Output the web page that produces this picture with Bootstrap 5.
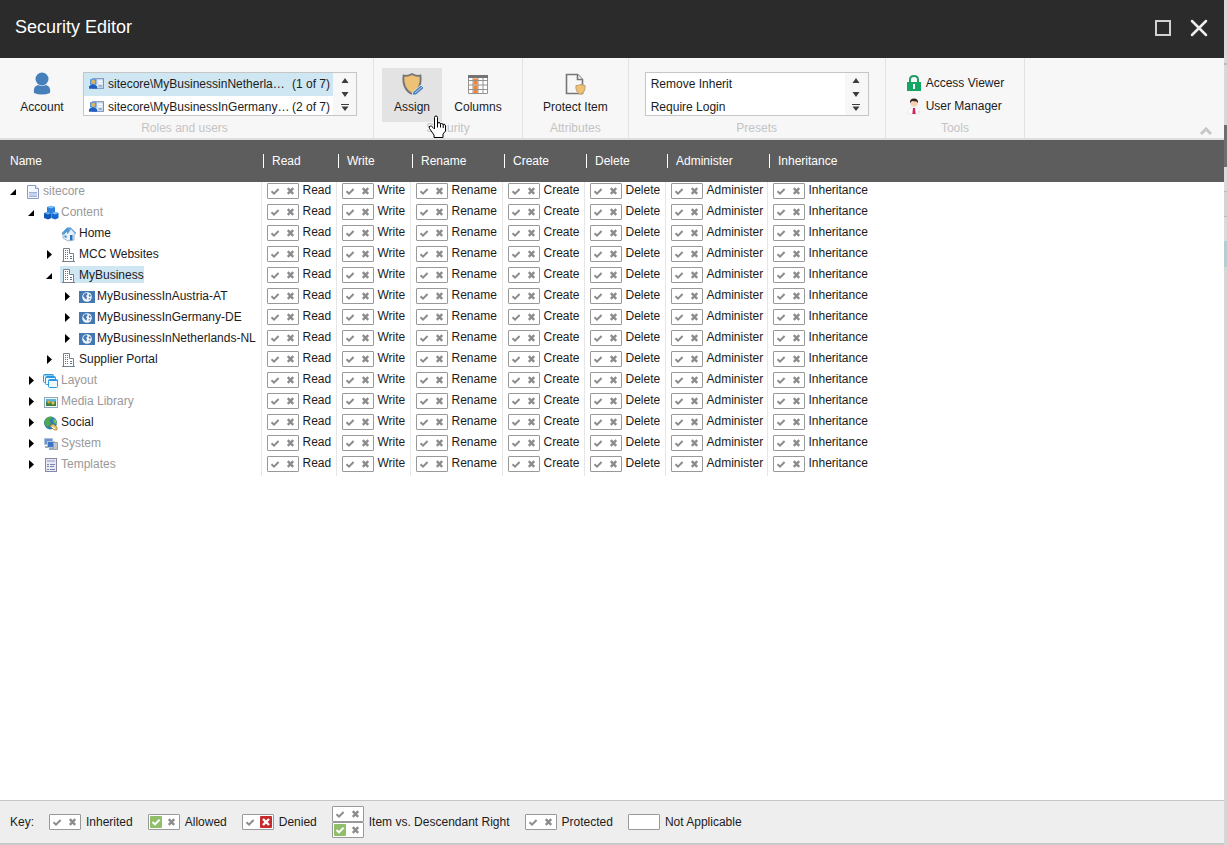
<!DOCTYPE html>
<html lang="en">
<head>
<meta charset="utf-8">
<meta name="viewport" content="width=device-width, initial-scale=1">
<title>Security Editor</title>
<link href="https://cdn.jsdelivr.net/npm/bootstrap@5.3.0/dist/css/bootstrap.min.css" rel="stylesheet">
<style>
body { font-family: "Liberation Sans", Arial, sans-serif; font-size: 12px; line-height: 16px; color: #1c1c1c; background: #d6d6d6; }
button { border: 0; background: none; padding: 0; color: inherit; }
svg { display: block; flex: none; }
.window { border-bottom: 2px solid #c8c8c8; background: #fff; }
.backdrop-edge { width: 3px; background: linear-gradient(#d9d9d9 63px, #bbb 63px 65px, #d9d9d9 65px 125px, #6e6e6e 125px 167px, #dadada 167px 191px, #bbb 191px 192px, #d4d4d4 192px 216px, #bbb 216px 217px, #dadada 217px 241px, #b7cdd1 241px 267px, #d6d6d6 267px); }
.titlebar { background: #2b2b2b; height: 58px; padding: 0 16px 2px 15px; color: #fff; }
.titlebar h1 { font-size: 18px; line-height: 24px; padding-bottom: 2px; }
.ribbon { background: #f7f7f7; height: 82px; border-bottom: 2px solid #dedede; }
.chunk { border-right: 1px solid #e2e2e2; padding: 10px 16px 4px; }
.chunk-accounts { padding-left: 12px; }
.chunk-title { color: #c4c4c4; text-align: center; line-height: 12px; }
.tool-row { gap: 6px; padding-right: 6px; }
.account-row { gap: 11px; }
.tool-btn { height: 54px; min-width: 60px; padding: 4px 4px 7px; display: flex; flex-direction: column; align-items: center; justify-content: space-between; position: relative; white-space: nowrap; flex: none; }
.tool-btn.active { background: #e3e3e3; }
.hand { position: absolute; left: 46px; top: 47px; z-index: 2; }
.picker { border: 1px solid #c6c6c6; background: #fff; height: 44px; margin-top: 4px; overflow: hidden; }
.picker-item { display: flex; width: 100%; height: 23px; align-items: center; padding: 0 3px 2px 5px; text-align: left; white-space: nowrap; }
.picker-item.selected { background: #cfe7f3; }
.picker-arrows { width: 23px; background: #f7f7f7; padding: 4px 0 3px; }
.users-picker { width: 274px; }
.presets-picker { width: 224px; }
.tool-links { padding: 3px 4px 0; }
.tool-link { color: inherit; text-decoration: none; height: 23px; gap: 4px; display: flex; align-items: center; white-space: nowrap; }
.collapse-btn { padding: 0 11px 2px 0; }
.rights { table-layout: fixed; width: 100%; border-collapse: collapse; }
.rights thead th { background: #5d5d5d; color: #fff; font-weight: normal; height: 42px; padding: 0 0 0 2px; white-space: nowrap; }
.rights thead th:first-child { padding-left: 10px; }
.head-label { border-left: 1px solid #fff; padding-left: 8px; line-height: 14px; display: block; }
.rights tbody tr { height: 21px; }
.rights td, .rights tbody th { padding: 0; font-weight: normal; white-space: nowrap; }
.rights td { border-left: 1px solid #e6e6e6; }
.cell-inner { display: flex; height: 21px; padding: 1px 0 0 5px; gap: 4px; line-height: 15px; }
.toggle-pair { display: inline-flex; width: 32px; height: 16px; border: 1px solid #999; border-radius: 1px; background: #fff; flex: none; justify-content: space-between; padding: 1px 1px; }
.toggle-pair > * { width: 12px; height: 12px; display: block; }
.node { height: 21px; display: flex; align-items: center; padding-bottom: 4px; }
.twisty { width: 16px; height: 16px; flex: none; }
.node-link { display: flex; align-items: center; color: #1c1c1c; text-decoration: none; gap: 2px; height: 17px; padding-left: 1px; }
.node-link.muted { color: #999; }
.node-link.selected { background: #cfe7f3; }
.node-link svg { margin-top: 2px; }
.d0 { padding-left: 8px; } .d1 { padding-left: 26px; } .d2 { padding-left: 44px; } .d3 { padding-left: 62px; }
.legend { background: #eee; border-top: 1px solid #c6c6c6; height: 43px; padding: 0 10px 1px; gap: 15px; white-space: nowrap; }
.legend-item { display: flex; align-items: center; gap: 5px; }
</style>
<script src="https://cdn.jsdelivr.net/npm/bootstrap@5.3.0/dist/js/bootstrap.bundle.min.js"></script>
</head>
<body class="d-flex min-vh-100">

<svg width="0" height="0" class="position-absolute" aria-hidden="true">
  <symbol id="i-check" viewBox="0 0 12 12"><path d="M2.5 6.2 5 8.6 9.6 4" fill="none" stroke="#8c8c8c" stroke-width="2"/></symbol>
  <symbol id="i-cross" viewBox="0 0 12 12"><path d="M2.8 3.2 8.2 8.8M8.2 3.2 2.8 8.8" fill="none" stroke="#8c8c8c" stroke-width="2.4"/></symbol>
  <symbol id="i-allow" viewBox="0 0 12 12"><rect width="12" height="12" rx="1" fill="#8fbf6a"/><path d="M2.5 6 5 8.4 9.6 3.6" fill="none" stroke="#fff" stroke-width="2"/></symbol>
  <symbol id="i-deny" viewBox="0 0 12 12"><rect width="12" height="12" rx="1" fill="#c62a2a"/><path d="m3 3 6 6M9 3 3 9" stroke="#fff" stroke-width="2.4"/></symbol>
  <symbol id="i-open" viewBox="0 0 16 16"><path d="M8 6v6H2z" fill="#000"/></symbol>
  <symbol id="i-closed" viewBox="0 0 16 16"><path d="M3 4 8 8.500l-5 4.500z" fill="#000"/></symbol>
  <symbol id="i-card" viewBox="0 0 14 14"><rect x="3.500" y="2.500" width="10" height="9" fill="#d9e4f3" stroke="#7a93bb"/><path d="M8.500 5h4M8.500 7h4" stroke="#fff"/><rect x="9" y="8.500" width="3" height="1.500" fill="#8ba3c9"/><path d="M1 3h6v5H1z" fill="#4c8fdc"/><circle cx="4" cy="5.500" r="2" fill="#e0b55f"/><path d="M0 12V9.500q4-3.500 7.500 0V12z" fill="#1f5fc0"/></symbol>
  <symbol id="i-page" viewBox="0 0 16 16"><path d="M2.500 1.500h8l3 3v10h-11z" fill="#f4f7fd" stroke="#8b9cc4"/><path d="M10.500 1.500v3h3" fill="#fff" stroke="#8b9cc4"/><path d="M4 8h8v5H4z" fill="#c3d1ec"/><path d="M4 8.500h8M4 12.500h8" stroke="#9db0da"/></symbol>
  <symbol id="i-cubes" viewBox="0 0 16 16"><path d="M4 2 8 .8l4 1.200v5L8 8.500 4 7z" fill="#2a80dc"/><path d="m4 2 4-1.200L12 2 8 3.500z" fill="#7cc0f8"/><path d="m1 8 4-1 3.500 1.500V13L5 14.500 1 13z" fill="#1257b8"/><path d="m1 8 4-1 3 1.300L5 9.500z" fill="#62acf2"/><path d="m8.500 8 3.500-1 3.500 1v5L12 14.500 8.500 13z" fill="#1768cc"/><path d="m8.500 8 3.500-1 3.500 1-3.500 1.500z" fill="#7cc0f8"/></symbol>
  <symbol id="i-home" viewBox="0 0 16 16"><path d="m1 7 5-5h4l5 5-2 1v6l-6 1-5-3V9z" fill="#e8f0f8" stroke="#8aa5c0" stroke-width=".8"/><path d="m.8 7.800 5-6h4.500L6.800 8l-1.300-2L3 8.800z" fill="#4f9bd8"/><path d="m10 2 5.200 5.500-1.200.6-4-4.600-3 4z" fill="#78aeda"/><path d="M9 9h2.500v5L9 14.500z" fill="#2873b5"/><path d="M3.500 9.500h2V12l-2-.8z" fill="#3787c8"/></symbol>
  <symbol id="i-building" viewBox="0 0 16 16"><path d="M2.500 14.500v-13h6v5h4v8z" fill="#fff" stroke="#76818e"/><path d="M4 3.500h1m1 0h1m-3 2h1m1 0h1m-3 2h1m1 0h1m-3 2h1m1 0h1m2 0h2m-7 2h1m1 0h1m2 0h2" stroke="#5d7188"/><path d="M1 14.500h13" stroke="#76818e"/></symbol>
  <symbol id="i-globe-site" viewBox="0 0 16 16"><rect y="2" width="16" height="12" fill="#4378b3"/><circle cx="8" cy="8" r="4.800" fill="#f2f6fa"/><path d="m4 7 1.500-2.500L8 4l.5 1.500L7 7l1 1.200-.5 2.300L6 9.500zM10.500 5l1.500 2-1.500 1-.8-1.500zM9.500 9.500l2-.5-1.500 2z" fill="#4378b3"/></symbol>
  <symbol id="i-windows" viewBox="0 0 16 16"><g fill="#eff8ff" stroke="#2998e2"><rect x=".5" y="1.500" width="10" height="8" rx="1"/><rect x="2.500" y="3.500" width="10" height="8" rx="1"/><rect x="5.500" y="6.500" width="9" height="8" rx="1"/></g><path d="M1 2h9M3 4.500h9M6 7.500h8" stroke="#2998e2"/></symbol>
  <symbol id="i-image" viewBox="0 0 16 16"><rect x="1.500" y="3.500" width="13" height="10" fill="#f5f8fa" stroke="#8fa6b6"/><path d="M3 5h10v4H3z" fill="#5bb4dd"/><path d="M3 8q3-2 5 0t5-1v5H3z" fill="#398243"/><circle cx="6" cy="8" r="1.600" fill="#dca333"/><circle cx="10" cy="9" r="1.600" fill="#e3c249"/></symbol>
  <symbol id="i-social" viewBox="0 0 16 16"><circle cx="7.500" cy="8" r="6.500" fill="#2d7fb2"/><path d="M1.500 6q2-4 6.500-4.500L10 3 6 5l2 3-3 4-3-2z" fill="#51a84a"/><path d="m10 4 3 1 1 4-3-1z" fill="#7bc061"/><path d="m7 11 3-2 4 3v3h-3z" fill="#e6c677" stroke="#a8822e" stroke-width=".7"/><path d="m9 12 3 2" stroke="#fff"/></symbol>
  <symbol id="i-system" viewBox="0 0 16 16"><rect x="1.500" y="2.500" width="8" height="6" fill="#6294d7" stroke="#b4c1d2"/><rect x="4.500" y="5.500" width="7" height="6" fill="#3e74c4" stroke="#b4c1d2"/><path d="M2 10h3v2H2z" fill="#9aabc0"/><path d="M10.500 6.500h4v7h-4z" fill="#c0c5cb" stroke="#9aa2ad"/><path d="M6 13h4" stroke="#9aabc0" stroke-width="2"/></symbol>
  <symbol id="i-template" viewBox="0 0 16 16"><rect x="2.500" y="1.500" width="11" height="13" fill="#e6e8f4" stroke="#8788a8"/><path d="M4 4h8" stroke="#8d96bd" stroke-width="1"/><path d="M4 7.500h2m1 0h5m-8 2h2m1 0h4m-7 3h2m1 0h5" stroke="#7d85ae"/></symbol>
</svg>

<main class="window flex-grow-1 d-flex flex-column">
  <header class="titlebar d-flex align-items-center justify-content-between">
    <h1 class="m-0 fw-normal">Security Editor</h1>
    <div class="d-flex align-items-center gap-3">
      <button type="button" aria-label="Maximize"><svg width="20" height="20" viewBox="0 0 20 20"><rect x="2" y="3" width="14" height="14" fill="none" stroke="#d2d2d2" stroke-width="2"/></svg></button>
      <button type="button" aria-label="Close"><svg width="18" height="18" viewBox="0 0 18 18"><path d="m2 2 14 14M16 2 2 16" stroke="#eee" stroke-width="2.500" stroke-linecap="round"/></svg></button>
    </div>
  </header>

  <div class="ribbon d-flex flex-shrink-0">
    <section class="chunk chunk-accounts d-flex flex-column justify-content-between">
      <div class="account-row d-flex">
        <button type="button" class="tool-btn">
          <svg width="22" height="24" viewBox="0 0 22 24"><circle cx="11" cy="7" r="6.500" fill="#4680bb"/><path d="M3 21q-1-7 4-8 4 2 8 0 5 1 4 8-8 3-16 0z" fill="#4680bb"/></svg>
          Account
        </button>
        <div class="picker users-picker d-flex">
          <div class="flex-grow-1">
            <button type="button" class="picker-item selected"><svg class="me-1" width="15" height="15"><use href="#i-card"/></svg>sitecore\MyBusinessinNetherla…<span class="ms-auto">(1 of 7)</span></button>
            <button type="button" class="picker-item"><svg class="me-1" width="15" height="15"><use href="#i-card"/></svg>sitecore\MyBusinessInGermany…<span class="ms-auto">(2 of 7)</span></button>
          </div>
          <div class="picker-arrows d-flex flex-column align-items-center justify-content-between">
            <button type="button" aria-label="Previous account"><svg width="8" height="8" viewBox="0 0 8 8"><path d="M.5 6 4 1l3.500 5z" fill="#3c3c3c"/></svg></button>
            <button type="button" aria-label="Next account"><svg width="8" height="8" viewBox="0 0 8 8"><path d="m.5 1 3.500 5 3.500-5z" fill="#3c3c3c"/></svg></button>
            <button type="button" aria-label="Show all accounts"><svg width="8" height="8" viewBox="0 0 8 8"><path d="M0 0h8v1H0zM.5 2.500 4 7l3.500-4.500z" fill="#3c3c3c"/></svg></button>
          </div>
        </div>
      </div>
      <div class="chunk-title">Roles and users</div>
    </section>

    <section class="chunk d-flex flex-column justify-content-between px-2">
      <div class="tool-row d-flex">
        <button type="button" class="tool-btn active">
          <svg width="24" height="24" viewBox="0 0 24 24"><path d="M3.500 3.500Q8 4.500 12 2q4 2.500 8.500 1.500Q22 17 12 22 2 17 3.500 3.500z" fill="#edc277" stroke="#777" stroke-width="1.800"/><path d="m12 23 1-3 8-7 3 3-8 7z" fill="#447dbd" stroke="#e3e3e3"/><path d="m15 21 7-6" stroke="#c7d9ed"/></svg>
          Assign
          <svg class="hand" width="18" height="24" viewBox="0 0 18 24"><path d="M6.500 14V2.500q0-1.500 1.500-1.500t1.500 1.500V9q0-1.500 1.500-1.500t1.500 2q0-1 1.300-1t1.400 1.500q0-1 1-.8t1.300 1.800v5L15 19v3.500H6V20l-4.500-6.500Q.5 11.500 2 11t3 1.500z" fill="#fff" stroke="#000"/><path d="M9.500 9v3.500m3-3v3m2.700-2.500v3" stroke="#000"/></svg>
        </button>
        <button type="button" class="tool-btn">
          <svg width="22" height="24" viewBox="0 0 22 24"><path d="M1.500 3.500h19v18h-19zM1 8.500h20M1 13h20M1 17.500h20M6 3v18m5-18v18m5-18v18" fill="#fff" stroke="#929292"/><path d="M1 3h20v3H1z" fill="#747474"/><path d="M6.500 6.500h4v1.500h-4zm0 2.500h4v3.500h-4zm0 4.500h4V17h-4zm0 4.500h4v3h-4z" fill="#f08439"/></svg>
          Columns
        </button>
      </div>
      <div class="chunk-title">Security</div>
    </section>

    <section class="chunk d-flex flex-column justify-content-between">
      <button type="button" class="tool-btn">
        <svg width="22" height="24" viewBox="0 0 22 24"><path d="M2.500 2.500h11l5 5v14h-16z" fill="#f7f7f7" stroke="#777" stroke-width="1.600"/><path d="M13.500 2.500v5h5" fill="#fff" stroke="#777" stroke-width="1.600"/><path d="M12 13.500q3 0 5-1 2 1 4 1 1 6-4.500 9-5.500-3-4.500-9z" fill="#edc277" stroke="#c19d66"/></svg>
        Protect Item
      </button>
      <div class="chunk-title">Attributes</div>
    </section>

    <section class="chunk d-flex flex-column justify-content-between">
      <div class="picker presets-picker d-flex">
        <div class="flex-grow-1">
          <button type="button" class="picker-item">Remove Inherit</button>
          <button type="button" class="picker-item">Require Login</button>
        </div>
        <div class="picker-arrows d-flex flex-column align-items-center justify-content-between">
          <button type="button" aria-label="Previous preset"><svg width="8" height="8" viewBox="0 0 8 8"><path d="M.5 6 4 1l3.500 5z" fill="#3c3c3c"/></svg></button>
          <button type="button" aria-label="Next preset"><svg width="8" height="8" viewBox="0 0 8 8"><path d="m.5 1 3.500 5 3.500-5z" fill="#3c3c3c"/></svg></button>
          <button type="button" aria-label="Show all presets"><svg width="8" height="8" viewBox="0 0 8 8"><path d="M0 0h8v1H0zM.5 2.500 4 7l3.500-4.500z" fill="#3c3c3c"/></svg></button>
        </div>
      </div>
      <div class="chunk-title">Presets</div>
    </section>

    <section class="chunk d-flex flex-column justify-content-between">
      <div class="tool-links">
        <a href="#access-viewer" class="tool-link"><svg width="16" height="18" viewBox="0 0 16 18"><path d="M4 9V5.500Q4 2 8 2t4 3.500V9" fill="none" stroke="#249c67" stroke-width="2"/><path d="M1 8h14v9H1z" fill="#12a765"/><path d="M7 10h2v5H7z" fill="#fff"/></svg>Access Viewer</a>
        <a href="#user-manager" class="tool-link"><svg width="16" height="18" viewBox="0 0 16 18"><path d="M2 17q0-6 4-6h4q4 0 4 6z" fill="#fff" stroke="#e3e3e8" stroke-width=".7"/><circle cx="8" cy="6" r="3.600" fill="#f5cfb5"/><path d="M4 6Q3.500 1.500 8 1.500T12 6L10.500 4.500 6 4z" fill="#302520"/><path d="m7 11h2l.7 6H6.300z" fill="#d0255d"/><path d="m11 14 3 .5-1 1.500z" fill="#dcdce0"/></svg>User Manager</a>
      </div>
      <div class="chunk-title">Tools</div>
    </section>
    <button type="button" class="collapse-btn ms-auto align-self-end" aria-label="Collapse ribbon"><svg width="14" height="9" viewBox="0 0 14 9"><path d="m2 7 5-5 5 5" fill="none" stroke="#c7c7c7" stroke-width="3"/></svg></button>
  </div>

  <table class="rights">
    <colgroup><col width="261"><col width="75"><col width="74"><col width="92"><col width="82"><col width="81"><col width="102"><col></colgroup>
    <thead><tr id="rights-head"><th scope="col">Name</th></tr></thead>
    <tbody id="rights-body"></tbody>
  </table>

  <footer class="legend d-flex align-items-center mt-auto">
    <span>Key:</span>
    <span class="legend-item"><span class="toggle-pair"><svg><use href="#i-check"/></svg><svg><use href="#i-cross"/></svg></span>Inherited</span>
    <span class="legend-item"><span class="toggle-pair"><svg><use href="#i-allow"/></svg><svg><use href="#i-cross"/></svg></span>Allowed</span>
    <span class="legend-item"><span class="toggle-pair"><svg><use href="#i-check"/></svg><svg><use href="#i-deny"/></svg></span>Denied</span>
    <span class="legend-item"><span class="d-flex flex-column"><span class="toggle-pair"><svg><use href="#i-check"/></svg><svg><use href="#i-cross"/></svg></span><span class="toggle-pair"><svg><use href="#i-allow"/></svg><svg><use href="#i-cross"/></svg></span></span>Item vs. Descendant Right</span>
    <span class="legend-item"><span class="toggle-pair"><svg><use href="#i-check"/></svg><svg><use href="#i-cross"/></svg></span>Protected</span>
    <span class="legend-item"><span class="toggle-pair"></span>Not Applicable</span>
  </footer>
</main>
<div class="backdrop-edge flex-shrink-0"></div>

<script>
// name, depth, icon, twisty state, extra class
const nodes = [
  ['sitecore', 0, 'page', 'open', 'muted'],
  ['Content', 1, 'cubes', 'open', 'muted'],
  ['Home', 2, 'home', '', ''],
  ['MCC Websites', 2, 'building', 'closed', ''],
  ['MyBusiness', 2, 'building', 'open', 'selected'],
  ['MyBusinessInAustria-AT', 3, 'globe-site', 'closed', ''],
  ['MyBusinessInGermany-DE', 3, 'globe-site', 'closed', ''],
  ['MyBusinessInNetherlands-NL', 3, 'globe-site', 'closed', ''],
  ['Supplier Portal', 2, 'building', 'closed', ''],
  ['Layout', 1, 'windows', 'closed', 'muted'],
  ['Media Library', 1, 'image', 'closed', 'muted'],
  ['Social', 1, 'social', 'closed', ''],
  ['System', 1, 'system', 'closed', 'muted'],
  ['Templates', 1, 'template', 'closed', 'muted']
];
const rights = ['Read', 'Write', 'Rename', 'Create', 'Delete', 'Administer', 'Inheritance'];
const icon = (id, size) => `<svg width="${size}" height="${size}"><use href="#i-${id}"/></svg>`;

document.getElementById('rights-head').insertAdjacentHTML('beforeend',
  rights.map(r => `<th scope="col"><span class="head-label">${r}</span></th>`).join(''));

document.getElementById('rights-body').innerHTML = nodes.map(([name, depth, pic, state, cls]) => {
  const twisty = state
    ? `<button type="button" class="twisty" aria-label="Toggle ${name}">${icon(state, 16)}</button>`
    : '<span class="twisty"></span>';
  const cells = rights.map(r => `<td><div class="cell-inner"><span class="toggle-pair">
    <button type="button" aria-label="Allow ${r} on ${name}">${icon('check', 12)}</button>
    <button type="button" aria-label="Deny ${r} on ${name}">${icon('cross', 12)}</button></span>${r}</div></td>`).join('');
  return `<tr><th scope="row"><div class="node d${depth}">${twisty}<a href="#" class="node-link ${cls}">${icon(pic, 16)}${name}</a></div></th>${cells}</tr>`;
}).join('');
</script>
</body>
</html>
